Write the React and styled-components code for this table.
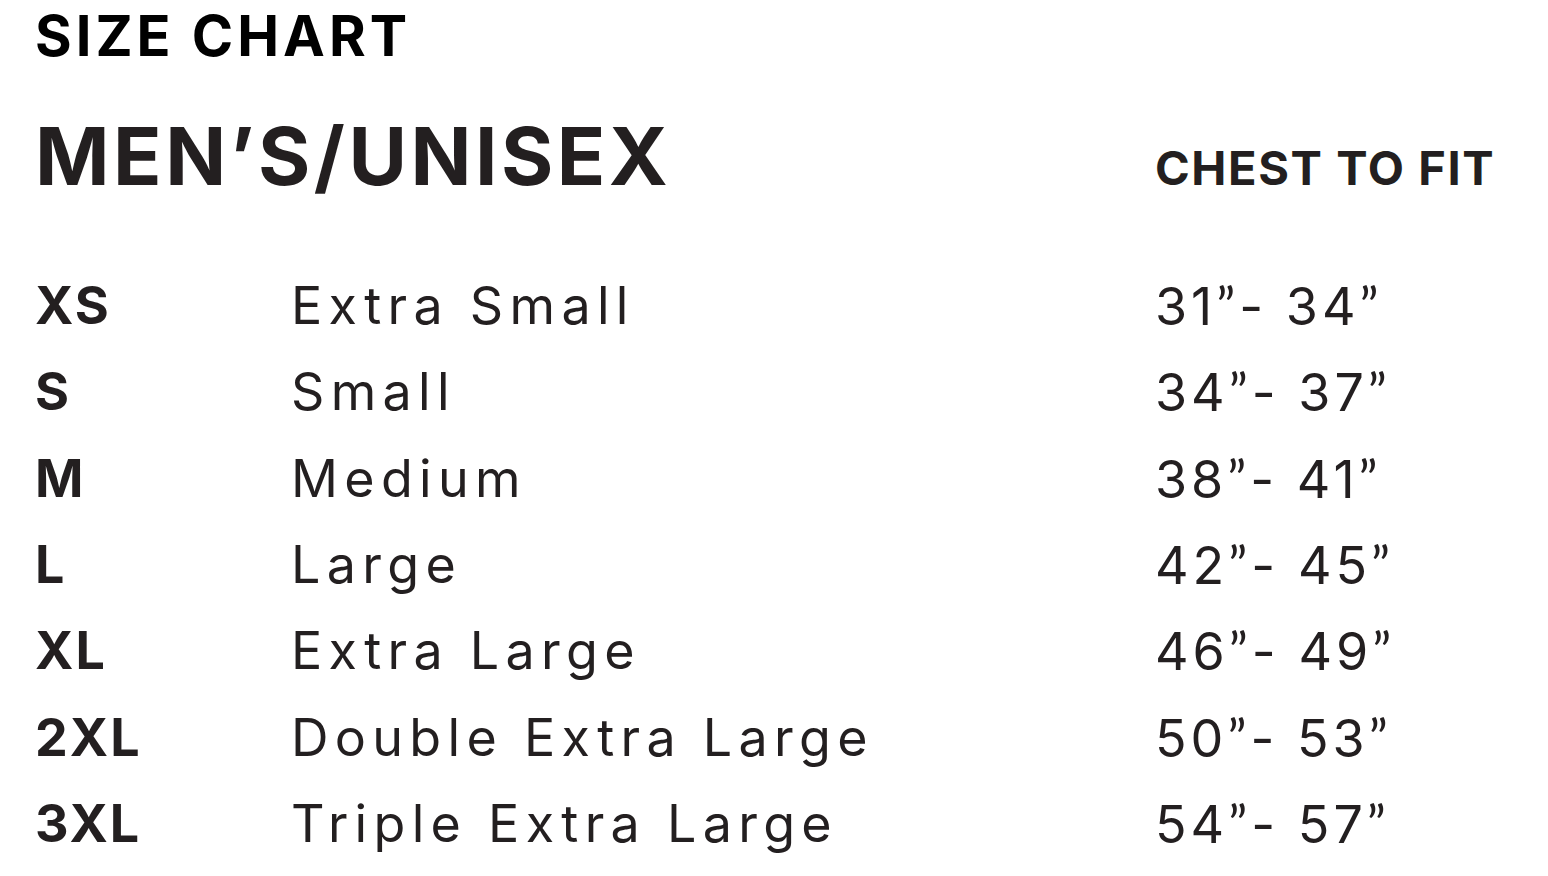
import styled, { createGlobalStyle } from 'styled-components'

const GlobalStyle = createGlobalStyle`
    body {
        margin: 0;
        background: #fff;
        font-family: Inter, "Noto Sans", sans-serif;
        color: #231f20;
    }
`

const sizes = [
    { code: 'XS', name: 'Extra Small', chest: [31, 34] },
    { code: 'S', name: 'Small', chest: [34, 37] },
    { code: 'M', name: 'Medium', chest: [38, 41] },
    { code: 'L', name: 'Large', chest: [42, 45] },
    { code: 'XL', name: 'Extra Large', chest: [46, 49] },
    { code: '2XL', name: 'Double Extra Large', chest: [50, 53] },
    { code: '3XL', name: 'Triple Extra Large', chest: [54, 57] },
]

const App = () => {
    return (
        <>
            <GlobalStyle />
            <Page>
                <Title>SIZE CHART</Title>
                <Chart>
                    <Group>MEN’S/UNISEX</Group>
                    <span />
                    <ColHead>CHEST TO FIT</ColHead>
                    {sizes.map(s => (
                        <Row key={s.code}>
                            <Code>{s.code}</Code>
                            <Cell spacing="6.3px">{s.name}</Cell>
                            <Cell spacing="4px">
                                {s.chest[0]}<Quote>”</Quote>- {s.chest[1]}<Quote>”</Quote>
                            </Cell>
                        </Row>
                    ))}
                </Chart>
            </Page>
        </>
    )
}

export default App

const Page = styled.div`
    padding: 4px 0 0 35px;
`

const Title = styled.h1`
    margin: 0;
    font-size: 56px;
    line-height: 64px;
    font-weight: 700;
    color: #000;
    letter-spacing: 4px;
`

const Chart = styled.div`
    display: grid;
    grid-template-columns: 256px 864px 1fr;
    grid-template-rows: 145px;
    grid-auto-rows: 86.3px;
    margin-top: 50px;
    align-items: center;
`

const Group = styled.h2`
    margin: 0;
    font-size: 80px;
    line-height: 80px;
    font-weight: 700;
    letter-spacing: 3.5px;
    white-space: nowrap;
    align-self: start;
    margin-top: -2px;
`

const ColHead = styled.div`
    font-size: 47px;
    font-weight: 700;
    line-height: 1;
    letter-spacing: 1.6px;
    align-self: start;
    margin-top: 26px;
    white-space: nowrap;
`

const Row = styled.div`
    display: contents;
`

const Code = styled.div`
    font-size: 52px;
    font-weight: 700;
    line-height: 1;
    letter-spacing: 2px;
`

const Cell = styled.div`
    font-size: 52px;
    font-weight: 400;
    line-height: 1;
    letter-spacing: ${p => p.spacing};
    white-space: nowrap;
`

const Quote = styled.span`
    font-family: Lato, "Open Sans", sans-serif;
    font-weight: 400;
`
